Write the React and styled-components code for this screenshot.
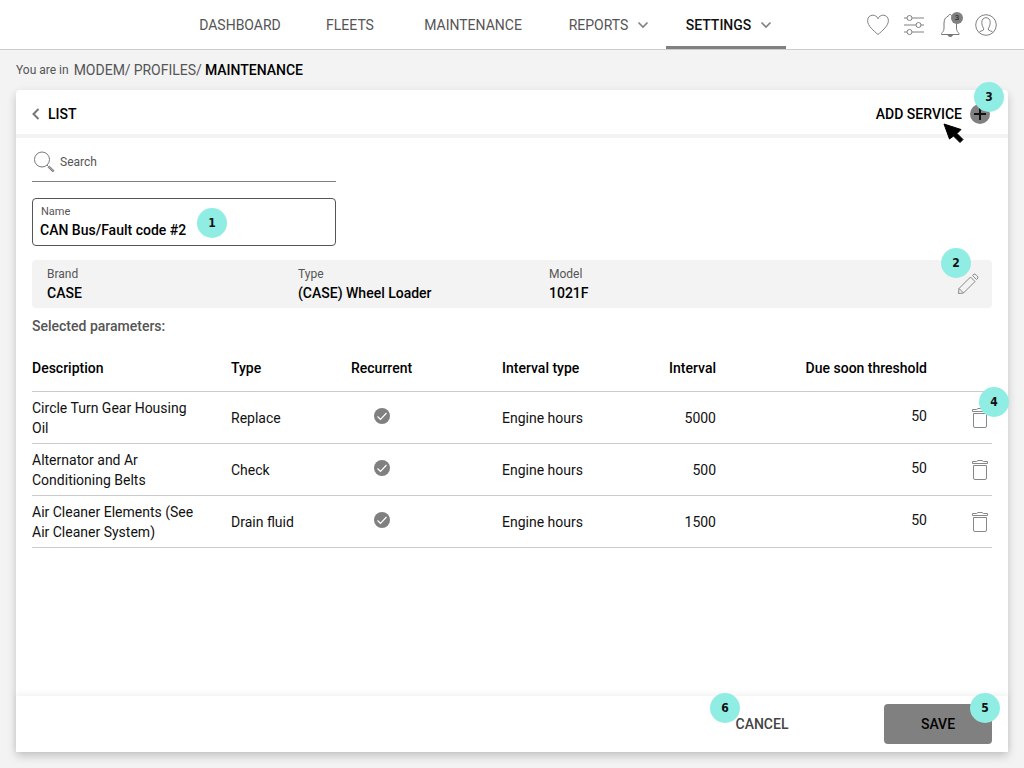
import React, { useState } from "react";
import styled, { createGlobalStyle, css } from "styled-components";

const initialServices = [
    {
        id: 1,
        description: "Circle Turn Gear Housing Oil",
        type: "Replace",
        recurrent: true,
        intervalType: "Engine hours",
        interval: 5000,
        threshold: 50,
        hint: 4,
    },
    {
        id: 2,
        description: "Alternator and Ar Conditioning Belts",
        type: "Check",
        recurrent: true,
        intervalType: "Engine hours",
        interval: 500,
        threshold: 50,
    },
    {
        id: 3,
        description: "Air Cleaner Elements (See Air Cleaner System)",
        type: "Drain fluid",
        recurrent: true,
        intervalType: "Engine hours",
        interval: 1500,
        threshold: 50,
    },
];

const ChevronDown = () => (
    <svg width="12" height="8" viewBox="0 0 12 8" fill="none" stroke="#808080" strokeWidth="1.6" aria-hidden="true">
        <path d="M1.5 1.5 L6 6 L10.5 1.5" />
    </svg>
);

const ChevronLeft = () => (
    <svg width="8" height="12" viewBox="0 0 8 12" fill="none" stroke="#777" strokeWidth="2" aria-hidden="true">
        <path d="M6.5 1 L1.5 6 L6.5 11" />
    </svg>
);

const HeartIcon = () => (
    <svg width="22" height="22" viewBox="0 0 22 22" fill="none" stroke="#808080" aria-hidden="true">
        <path d="M11 20.5 C7 17 0.6 12 0.6 6.6 C0.6 3.2 3 1.2 5.8 1.2 C8.3 1.2 10.2 2.6 11 4.8 C11.8 2.6 13.7 1.2 16.2 1.2 C19 1.2 21.4 3.2 21.4 6.6 C21.4 12 15 17 11 20.5 Z" />
    </svg>
);

const SlidersIcon = () => (
    <svg width="22" height="22" viewBox="0 0 22 22" fill="none" stroke="#808080" aria-hidden="true">
        <path d="M1 4 H4 M9 4 H21 M1 11 H13 M18 11 H21 M1 18 H4 M9 18 H21" />
        <circle cx="6.5" cy="4" r="2.5" />
        <circle cx="15.5" cy="11" r="2.5" />
        <circle cx="6.5" cy="18" r="2.5" />
    </svg>
);

const BellIcon = () => (
    <svg width="22" height="24" viewBox="0 0 22 24" fill="none" stroke="#777" aria-hidden="true">
        <path d="M2.5 21.5 C2 19.5 5 19.5 5 15 V10 C5 6 7.3 3.5 9.5 3 C9.5 0.9 12.5 0.9 12.5 3 C15 3.5 17.500 6 17.5 10 V15 C17.5 19.5 20.500 19.5 20 21.5 Z" />
        <path d="M9 22 H13.5 C13 24 9.5 24 9 22 Z" fill="#777" />
    </svg>
);

const UserIcon = () => (
    <svg width="22" height="22" viewBox="0 0 22 22" fill="none" stroke="#808080" aria-hidden="true">
        <circle cx="11" cy="11" r="10.3" />
        <path d="M4 18.500 C4.500 16.500 8.800 17.500 8.800 15 C8.800 14 6.800 12.500 6.800 8.500 C6.800 5.500 8.500 3.700 11 3.700 C13.500 3.700 15.200 5.500 15.200 8.500 C15.200 12.500 13.200 14 13.200 15 C13.200 17.500 17.500 16.500 18 18.500" />
    </svg>
);

const PlusIcon = () => (
    <svg width="20" height="20" viewBox="0 0 20 20" aria-hidden="true">
        <circle cx="10" cy="10" r="10" fill="#808080" />
        <path d="M10 4 V16 M4 10 H16" stroke="#111" strokeWidth="2" />
    </svg>
);

const CursorIcon = () => (
    <svg width="22" height="22" viewBox="0 0 22 22" aria-hidden="true">
        <path
            d="M1 1 L6.5 16 L10.5 13 L17 19.5 L20 16.500 L14 10.5 L18 6.5 Z"
            fill="#000"
            stroke="#000"
            strokeLinejoin="round"
        />
    </svg>
);

const SearchIcon = () => (
    <svg width="22" height="22" viewBox="0 0 22 22" fill="none" stroke="#777" aria-hidden="true">
        <circle cx="9" cy="8.5" r="7.5" />
        <path d="M14 14 L15.5 15.5" />
        <path d="M15.2 16.4 L16.4 15.2 L21 19.7 L19.8 20.9 Z" fill="#aaa" />
    </svg>
);

const PencilIcon = () => (
    <svg width="22" height="22" viewBox="0 0 22 22" fill="none" stroke="#888" aria-hidden="true">
        <path d="M1.5 20.5 L2 15.500 L13.500 4 L18 8.500 L6.500 20 Z M2 15.500 L6.500 20 M15.500 2.500 L17 1 C18 0.400 21.600 4 21 5 L19.500 6.500 Z" />
    </svg>
);

const TrashIcon = () => (
    <svg width="16" height="21" viewBox="0 0 16 21" fill="none" stroke="#888" aria-hidden="true">
        <path d="M0.5 4.5 V2.500 H4.5 L6 1.500 H10 L11.5 2.5 H15.5 V4.5 Z" />
        <path d="M1.5 6.5 H14.5 V19 Q14.5 20.5 13 20.5 H3 Q1.5 20.5 1.5 19 Z" />
    </svg>
);

const CheckIcon = () => (
    <svg width="16" height="16" viewBox="0 0 16 16" role="img" aria-label="Yes">
        <circle cx="8" cy="8" r="8" fill="#808080" />
        <path d="M3.5 8.5 L6.5 11.3 L12.5 5" fill="none" stroke="#fff" strokeWidth="1.2" />
    </svg>
);

const App = () => {
    const [services, setServices] = useState(initialServices);
    const [name, setName] = useState("CAN Bus/Fault code #2");
    const [search, setSearch] = useState("");

    const removeService = (id) => {
        setServices(services.filter((service) => service.id !== id));
    };

    const visible = services.filter((service) =>
        service.description.toLowerCase().includes(search.toLowerCase())
    );

    return (
        <Page>
            <GlobalStyle />
            <TopBar>
                <Nav>
                    <NavLink href="#dashboard" $width={120}>DASHBOARD</NavLink>
                    <NavLink href="#fleets" $width={100}>FLEETS</NavLink>
                    <NavLink href="#maintenance" $width={146}>MAINTENANCE</NavLink>
                    <NavLink href="#reports" $width={120} $menu>
                        REPORTS <ChevronDown />
                    </NavLink>
                    <NavLink href="#settings" $width={120} $menu $active>
                        SETTINGS <ChevronDown />
                    </NavLink>
                </Nav>
                <Actions>
                    <IconButton aria-label="Favourites"><HeartIcon /></IconButton>
                    <IconButton aria-label="Filters"><SlidersIcon /></IconButton>
                    <IconButton aria-label="Notifications">
                        <BellIcon />
                        <Count>3</Count>
                    </IconButton>
                    <IconButton aria-label="Account"><UserIcon /></IconButton>
                </Actions>
            </TopBar>

            <Breadcrumb aria-label="Breadcrumb">
                <small>You are in</small>
                <a href="#modem">MODEM/</a>
                <a href="#profiles">PROFILES/</a>
                <strong>MAINTENANCE</strong>
            </Breadcrumb>

            <Card>
                <CardHeader>
                    <TextButton>
                        <ChevronLeft /> LIST
                    </TextButton>
                    <TextButton>
                        ADD SERVICE <PlusIcon />
                        <Cursor><CursorIcon /></Cursor>
                        <Hint $top={-18} $right={-14}>3</Hint>
                    </TextButton>
                </CardHeader>

                <Body>
                    <SearchField>
                        <SearchIcon />
                        <input
                            type="text"
                            aria-label="Search"
                            placeholder="Search"
                            value={search}
                            onChange={(e) => setSearch(e.target.value)}
                        />
                    </SearchField>

                    <NameField>
                        <label htmlFor="name">Name</label>
                        <input id="name" type="text" value={name} onChange={(e) => setName(e.target.value)} />
                        <Hint $top={9} $left={164}>1</Hint>
                    </NameField>

                    <Machine>
                        <MachineItem>
                            <dt>Brand</dt>
                            <dd>CASE</dd>
                        </MachineItem>
                        <MachineItem>
                            <dt>Type</dt>
                            <dd>(CASE) Wheel Loader</dd>
                        </MachineItem>
                        <MachineItem>
                            <dt>Model</dt>
                            <dd>1021F</dd>
                        </MachineItem>
                        <IconButton aria-label="Edit machine">
                            <PencilIcon />
                            <Hint $top={-25} $right={8}>2</Hint>
                        </IconButton>
                    </Machine>

                    <SectionTitle>Selected parameters:</SectionTitle>

                    <Table>
                        <colgroup>
                            <col />
                            <Col $width={120} />
                            <Col $width={151} />
                            <Col $width={120} />
                            <Col $width={94} />
                            <Col $width={211} />
                            <Col $width={65} />
                        </colgroup>
                        <thead>
                            <tr>
                                <Th>Description</Th>
                                <Th>Type</Th>
                                <Th>Recurrent</Th>
                                <Th>Interval type</Th>
                                <Th $right>Interval</Th>
                                <Th $right>Due soon threshold</Th>
                                <Th aria-label="Actions" />
                            </tr>
                        </thead>
                        <tbody>
                            {visible.map((service) => (
                                <tr key={service.id}>
                                    <Td $wrap>{service.description}</Td>
                                    <Td>{service.type}</Td>
                                    <Td $icon>{service.recurrent && <CheckIcon />}</Td>
                                    <Td>{service.intervalType}</Td>
                                    <Td $right>{service.interval}</Td>
                                    <Td $right $raised>{service.threshold}</Td>
                                    <Td>
                                        <DeleteButton
                                            aria-label={`Delete ${service.description}`}
                                            onClick={() => removeService(service.id)}
                                        >
                                            <TrashIcon />
                                            {service.hint && <Hint $top={-20} $right={-21}>{service.hint}</Hint>}
                                        </DeleteButton>
                                    </Td>
                                </tr>
                            ))}
                        </tbody>
                    </Table>
                </Body>

                <Footer>
                    <Button>
                        CANCEL
                        <Hint $top={-11} $left={2}>6</Hint>
                    </Button>
                    <Button $primary>
                        SAVE
                        <Hint $top={-11} $right={-8}>5</Hint>
                    </Button>
                </Footer>
            </Card>
        </Page>
    );
};

const GlobalStyle = createGlobalStyle`
    * {
        box-sizing: border-box;
    }

    body {
        margin: 0;
        background: #f3f3f3;
        color: #111;
        font-family: Roboto, sans-serif;
        font-size: 14px;
        line-height: 20px;
    }

    button,
    input {
        font: inherit;
        color: inherit;
        background: none;
        border: none;
        padding: 0;
        outline: none;
    }

    button {
        cursor: pointer;
    }

    svg {
        display: block;
        flex-shrink: 0;
    }
`;

const Page = styled.div`
    min-height: 100vh;
    display: flex;
    flex-direction: column;
`;

const TopBar = styled.header`
    height: 50px;
    display: flex;
    justify-content: space-between;
    padding: 0 27px 0 180px;
    background: #fff;
    border-bottom: 1px solid #ccc;
`;

const Nav = styled.nav`
    display: flex;
`;

const NavLink = styled.a`
    width: ${({ $width }) => $width}px;
    display: flex;
    align-items: center;
    justify-content: center;
    gap: 9px;
    padding-top: 4px;
    padding-left: ${({ $menu }) => ($menu ? 6 : 0)}px;
    border-bottom: 3px solid transparent;
    color: #555;
    text-decoration: none;

    ${({ $active }) =>
        $active &&
        css`
            color: #111;
            font-weight: 500;
            border-bottom-color: #808080;
        `}
`;

const Actions = styled.div`
    display: flex;
    align-items: center;
    gap: 14px;
`;

const IconButton = styled.button`
    position: relative;
    display: flex;
`;

const Count = styled.span`
    position: absolute;
    top: -1px;
    right: -2px;
    width: 12px;
    height: 12px;
    border-radius: 50%;
    background: #808080;
    color: #222;
    font-size: 8px;
    line-height: 12px;
    text-align: center;
`;

const Breadcrumb = styled.nav`
    height: 40px;
    display: flex;
    align-items: center;
    gap: 3px;
    padding: 0 16px;

    small {
        margin-right: 2px;
        font-size: 12px;
        color: #555;
    }

    a {
        color: #555;
        text-decoration: none;
    }

    strong {
        font-weight: 500;
        color: #000;
    }
`;

const Card = styled.main`
    flex: 1;
    display: flex;
    flex-direction: column;
    margin: 0 16px 16px;
    background: #fff;
    border-radius: 4px 4px 0 0;
    box-shadow: 0 4px 10px rgba(0, 0, 0, 0.2);
`;

const CardHeader = styled.div`
    height: 48px;
    display: flex;
    align-items: center;
    justify-content: space-between;
    padding: 0 18px 0 16px;
    border-bottom: 4px solid #f3f3f3;
`;

const TextButton = styled.button`
    position: relative;
    display: flex;
    align-items: center;
    gap: 8px;
    padding-top: 4px;
    font-weight: 500;
    color: #000;
`;

const Cursor = styled.span`
    position: absolute;
    top: 23px;
    right: 25px;
`;

const Hint = styled.span`
    position: absolute;
    z-index: 1;
    top: ${({ $top }) => $top}px;
    ${({ $left }) => $left !== undefined && `left: ${$left}px;`}
    ${({ $right }) => $right !== undefined && `right: ${$right}px;`}
    width: 30px;
    height: 30px;
    border-radius: 50%;
    background: #90ede3;
    color: #111;
    font-family: "DejaVu Sans Condensed", "DejaVu Sans", sans-serif;
    font-size: 12px;
    font-weight: 700;
    line-height: 30px;
    text-align: center;
`;

const Body = styled.div`
    flex: 1;
    padding: 4px 16px 16px;
`;

const SearchField = styled.div`
    max-width: 304px;
    height: 40px;
    display: flex;
    align-items: center;
    gap: 5px;
    padding-left: 1px;
    border-bottom: 1px solid #808080;

    input {
        flex: 1;
        min-width: 0;
        font-size: 12px;
    }

    input::placeholder {
        color: #555;
        opacity: 1;
    }
`;

const NameField = styled.div`
    position: relative;
    max-width: 304px;
    height: 48px;
    display: flex;
    flex-direction: column;
    margin-top: 16px;
    padding: 5px 7px 0;
    border: 1px solid #555;
    border-radius: 4px;

    label {
        padding-left: 1px;
        font-size: 11px;
        line-height: 16px;
        color: #555;
    }

    input {
        height: 20px;
        font-weight: 500;
        color: #000;
    }
`;

const Machine = styled.dl`
    height: 48px;
    display: flex;
    align-items: center;
    margin: 14px 0 0;
    padding: 0 13px 0 15px;
    background: #f3f3f3;
    border-radius: 4px;

    ${IconButton} {
        margin-left: auto;
    }
`;

const MachineItem = styled.div`
    width: 251px;

    dt {
        font-size: 12px;
        line-height: 18px;
        color: #555;
    }

    dd {
        margin: 0;
        font-weight: 500;
        color: #000;
    }
`;

const SectionTitle = styled.h2`
    margin: 8px 0 9px;
    font-size: 14px;
    line-height: 20px;
    font-weight: 500;
    color: #555;
`;

const Table = styled.table`
    width: 100%;
    table-layout: fixed;
    border-spacing: 0;
`;

const Col = styled.col`
    width: ${({ $width }) => $width}px;
`;

const Th = styled.th`
    height: 47px;
    padding: 0;
    border-bottom: 1px solid #ccc;
    font-weight: 500;
    color: #000;
    text-align: ${({ $right }) => ($right ? "right" : "left")};
`;

const Td = styled.td`
    height: 52px;
    padding: 0;
    padding-right: ${({ $wrap }) => ($wrap ? 32 : 0)}px;
    padding-bottom: ${({ $raised, $icon }) => ($raised || $icon ? 4 : 0)}px;
    padding-left: ${({ $icon }) => ($icon ? 23 : 0)}px;
    border-bottom: 1px solid #ccc;
    text-align: ${({ $right }) => ($right ? "right" : "left")};
`;

const DeleteButton = styled(IconButton)`
    margin-left: auto;
    margin-right: 4px;
`;

const Footer = styled.footer`
    height: 56px;
    display: flex;
    align-items: center;
    justify-content: flex-end;
    gap: 68px;
    padding: 0 16px;
    box-shadow: 0 -2px 6px rgba(0, 0, 0, 0.06);
`;

const Button = styled.button`
    position: relative;
    width: 108px;
    height: 40px;
    border-radius: 4px;
    font-weight: 500;
    color: ${({ $primary }) => ($primary ? "#000" : "#444")};
    background: ${({ $primary }) => ($primary ? "#808080" : "transparent")};
`;

export default App;
